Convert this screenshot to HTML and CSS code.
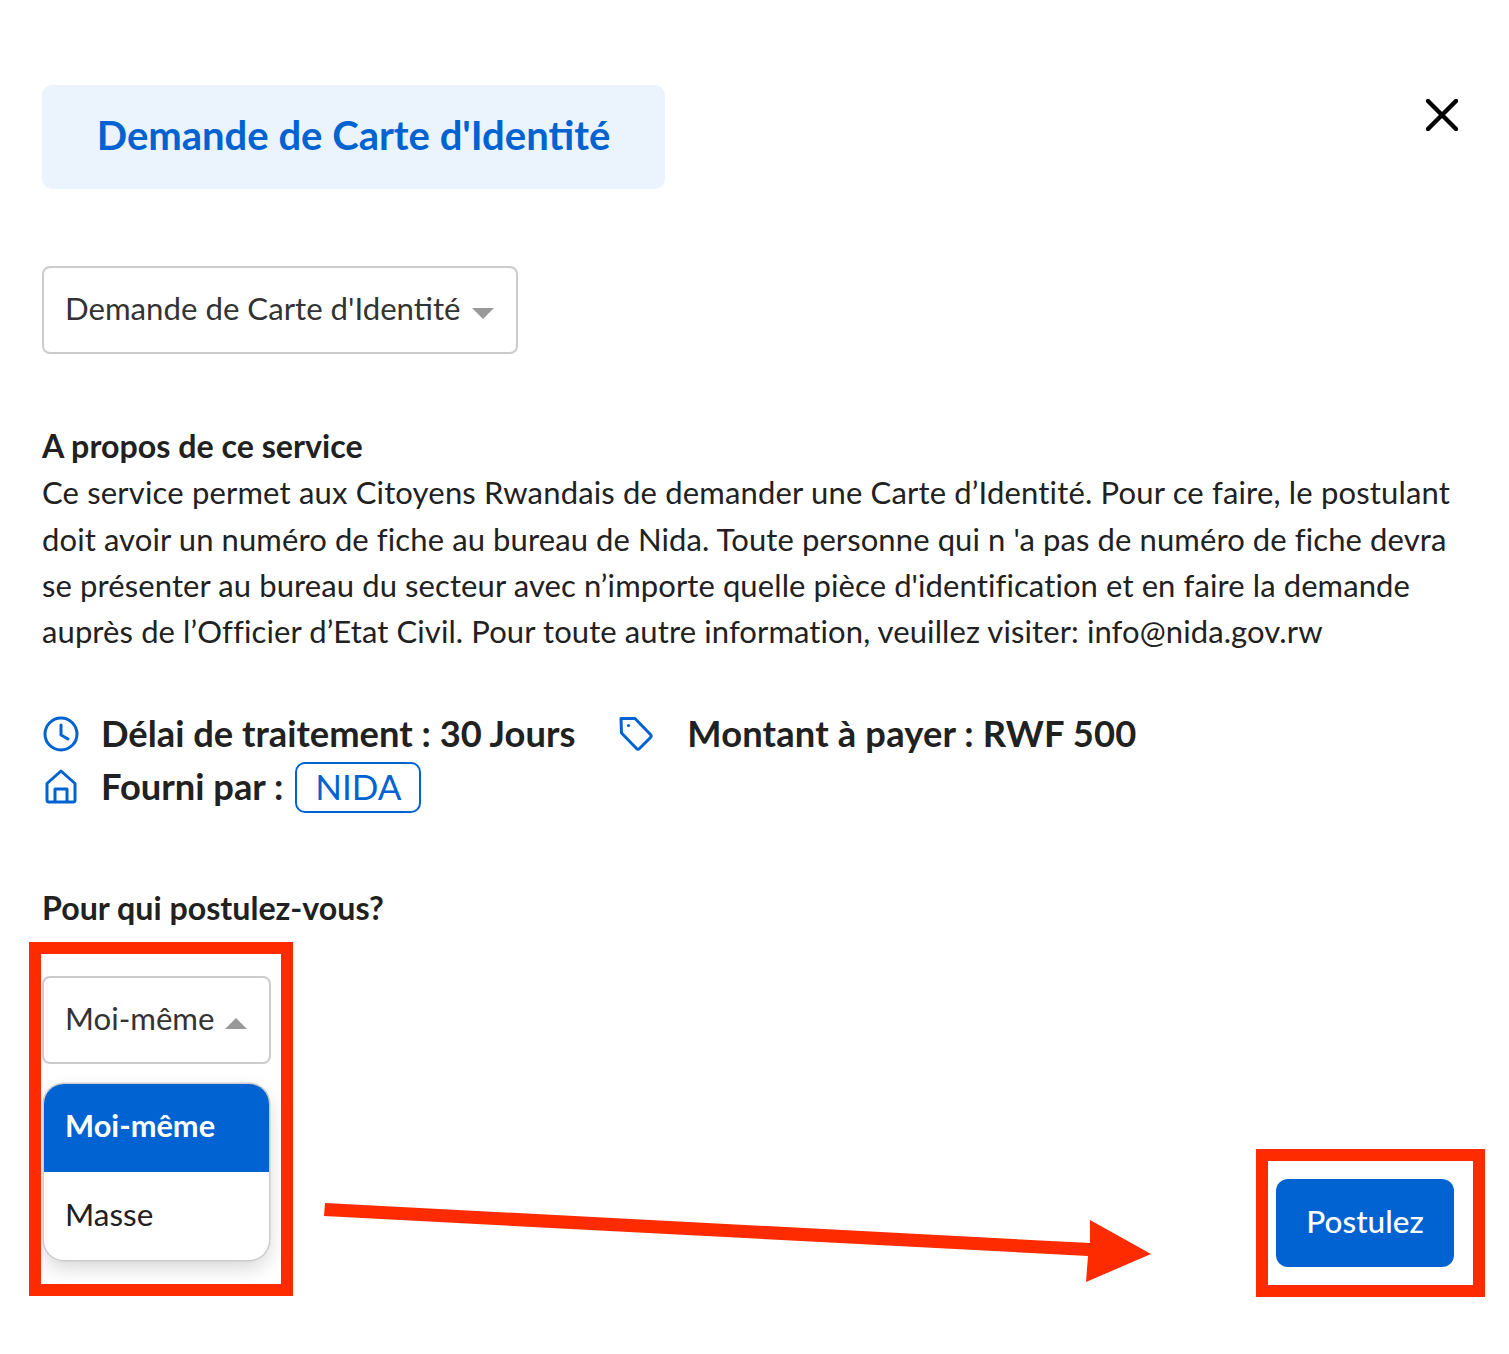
FILE: index.html
```html
<!DOCTYPE html>
<html lang="fr">
<head>
<meta charset="utf-8">
<title>Demande de Carte d'Identité</title>
<link rel="stylesheet" href="styles.css">
</head>
<body>
<main class="modal">
  <header class="head">
    <h1 class="title">Demande de Carte d'Identité</h1>
    <svg class="close" width="32" height="32" viewBox="0 0 32 32"><path d="M2 2 30 30M30 2 2 30" fill="none" stroke="#000" stroke-width="4.500" stroke-linecap="round"/></svg>
  </header>
  <div class="select service"><span>Demande de Carte d'Identité</span><i class="caret down"></i></div>
  <section class="about">
    <h2 class="about-h">A propos de ce service</h2>
    <p class="line line-wide">Ce service permet aux Citoyens Rwandais de demander une Carte d’Identité. Pour ce faire, le postulant</p>
    <p class="line">doit avoir un numéro de fiche au bureau de Nida. Toute personne qui n 'a pas de numéro de fiche devra</p>
    <p class="line">se présenter au bureau du secteur avec n’importe quelle pièce d'identification et en faire la demande</p>
    <p class="line">auprès de l’Officier d’Etat Civil. Pour toute autre information, veuillez visiter: info@nida.gov.rw</p>
  </section>
  <section class="meta">
    <div class="meta-row">
      <svg class="ico" width="36" height="36" viewBox="0 0 36 36" fill="none" stroke="#0063d1" stroke-width="3" stroke-linecap="round" stroke-linejoin="round"><circle cx="18" cy="18" r="16"/><path d="M18 9v10l7 4"/></svg>
      <span class="meta-t">Délai de traitement : 30 Jours</span>
      <svg class="ico tag" width="36" height="36" viewBox="0 0 36 36" fill="none" stroke="#0063d1" stroke-width="3" stroke-linejoin="round"><path d="M2 2.500H16L31.500 18.500Q33 20 31.500 21.500L20.500 32.500Q19 34 17.500 32.500L2.500 17Z"/><circle cx="9.500" cy="9.500" r="1.600" fill="#0063d1" stroke="none" /></svg>
      <span class="meta-t">Montant à payer : RWF 500</span>
    </div>
    <div class="meta-row">
      <svg class="ico" width="36" height="36" viewBox="0 0 36 36" fill="none" stroke="#0063d1" stroke-width="3" stroke-linejoin="round"><path d="M18 2 32 14.500V31Q32 33 30 33H6Q4 33 4 31V14.500Z"/><path d="M12 33V20H24V33"/></svg>
      <span class="meta-t">Fourni par :</span>
      <span class="chip">NIDA</span>
    </div>
  </section>
  <h2 class="who">Pour qui postulez-vous?</h2>
  <div class="select who-select"><span>Moi-même</span><i class="caret up"></i></div>
  <ul class="menu">
    <li class="opt on">Moi-même</li>
    <li class="opt">Masse</li>
  </ul>
  <button class="apply" type="button">Postulez</button>
</main>
<div class="mark mark-a"></div>
<div class="mark mark-b"></div>
<svg class="arrow" width="1509" height="1354" viewBox="0 0 1509 1354"><path d="M325 1203 1090 1243 1090 1220 1151 1254 1086 1282 1088 1256 324 1216Z" fill="#ff2b00"/></svg>
</body>
</html>
```
FILE: styles.css
```css
* { box-sizing: border-box; }
html, body { margin: 0; background: #fff; }
body { height: 1354px; overflow: hidden; position: relative; font-family: "Lato", "Noto Sans", sans-serif; color: #212121; }
.modal { padding: 85px 42px 0; display: flex; flex-direction: column; align-items: flex-start; position: relative; height: 100%; }
.head { display: flex; justify-content: space-between; width: 100%; padding-right: 9px; }
.title { margin: 0; width: 623px; height: 104px; padding-bottom: 5px; background: #ebf3fc; border-radius: 10px; display: flex; align-items: center; justify-content: center; color: #0063d1; font-size: 40px; font-weight: 700; white-space: nowrap; }
.close { margin-top: 14px; }
.select { display: flex; align-items: center; justify-content: space-between; height: 88px; border: 2px solid #ccc; border-radius: 8px; padding: 0 22px; font-size: 31.200px; color: #333; background: #fff; white-space: nowrap; }
.select span { padding-bottom: 5px; margin-left: -1px; }
.service { width: 476px; margin-top: 77px; }
.caret { width: 0; height: 0; border-left: 11px solid transparent; border-right: 11px solid transparent; margin-top: 6px; }
.caret.down { border-top: 11px solid #999; }
.caret.up { border-bottom: 11px solid #999; }
.about { margin-top: 69px; font-size: 31px; line-height: 46.300px; }
.about-h { margin: 0; font-size: 32.200px; font-weight: 700; }
.line { margin: 0; white-space: nowrap; letter-spacing: 0.100px; }
.line-wide { letter-spacing: 0.170px; }
.meta { margin-top: 55px; display: flex; flex-direction: column; gap: 3px; }
.meta-row { display: flex; align-items: center; height: 50px; }
.ico { flex: none; margin-left: 1px; }
.tag { margin-left: 44px; }
.meta-t { font-size: 36.300px; font-weight: 700; margin-left: 22px; white-space: nowrap; padding-bottom: 2px; }
.tag + .meta-t { margin-left: 32px; letter-spacing: 0.150px; }
.chip { margin-left: 12px; height: 51px; border: 2px solid #0063d1; border-radius: 10px; padding: 0 18px 2px; display: flex; align-items: center; color: #0063d1; font-size: 35px; }
.who { margin: 76px 0 0; font-size: 32.200px; font-weight: 700; line-height: 40px; }
.who-select { width: 229px; margin-top: 48px; }
.menu { list-style: none; margin: 20px 0 0 2px; padding: 0; width: 225px; background: #fff; border-radius: 20px; overflow: hidden; box-shadow: 0 0 0 1.500px #ccc, 0 8px 20px rgba(0,0,0,.16); }
.opt { height: 88px; display: flex; align-items: center; padding: 0 22px 5px 21px; font-size: 31.500px; }
.opt.on { background: #0063d1; color: #fff; font-weight: 700; font-size: 30.800px; }
.apply { position: absolute; left: 1276px; top: 1179px; width: 178px; height: 88px; padding: 0 0 5px; border: 0; border-radius: 12px; background: #0063d1; color: #fff; font: 500 31.500px "Lato", sans-serif; }
.mark { position: absolute; border: 12px solid #ff2b00; background: transparent; }
.mark-a { left: 29px; top: 942px; width: 264px; height: 354px; }
.mark-b { left: 1256px; top: 1149px; width: 229px; height: 148px; }
.arrow { position: absolute; left: 0; top: 0; pointer-events: none; }
```
